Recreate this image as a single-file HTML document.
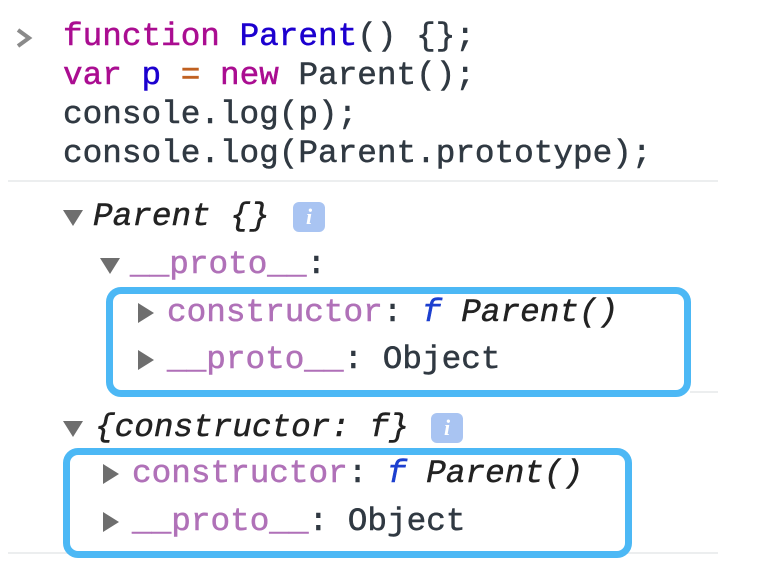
<!DOCTYPE html>
<html><head><meta charset="utf-8"><style>
html,body{margin:0;padding:0;background:#fff;width:778px;height:571px;overflow:hidden;position:relative}
.t{position:absolute;font-family:"Liberation Mono",monospace;font-size:32.7px;line-height:39px;white-space:pre;color:#303942;-webkit-text-stroke:0.5px currentColor}
.k{color:#aa0d91}.b{color:#1c00cf}.o{color:#c06020}.pp{color:#b071b8}.i{font-style:italic;color:#222}.f{font-style:italic;color:#1c3fcf}
.sep{position:absolute;height:2px;background:#eceeef}
.box{position:absolute;border:7px solid #4cb8f5;border-radius:15px;box-sizing:border-box}
.tri{position:absolute;width:0;height:0}
.dn{border-left:10px solid transparent;border-right:10px solid transparent;border-top:16px solid #6e6e6e}
.rt{border-top:10px solid transparent;border-bottom:10px solid transparent;border-left:16px solid #6e6e6e}
.info{position:absolute;width:32px;height:30px;border-radius:6px;background:#a9c4f2;color:#fff;font:italic bold 22px "Liberation Serif",serif;text-align:center;line-height:30px}
</style></head><body>
<svg style="position:absolute;left:14px;top:27px" width="20" height="22" viewBox="0 0 20 22"><path d="M4 3 L15 11 L4 19" fill="none" stroke="#8a8a8a" stroke-width="4"/></svg>
<div class="t" style="left:63px;top:17px"><span class="k">function</span> <span class="b">Parent</span>() {};
<span class="k">var</span> <span class="b">p</span> <span class="o">=</span> <span class="k">new</span> Parent();
console.log(p);
console.log(Parent.prototype);</div>
<div class="sep" style="left:8px;top:180px;width:710px"></div>

<div class="tri dn" style="left:63px;top:210px"></div>
<div class="t i" style="left:93px;top:197px">Parent {}</div>
<div class="info" style="left:293px;top:202px">i</div>

<div class="tri dn" style="left:100px;top:258px"></div>
<div class="t" style="left:130px;top:245px"><span class="pp">__proto__</span>:</div>

<div class="box" style="left:106px;top:287px;width:585px;height:110px"></div>
<div class="tri rt" style="left:138px;top:303px"></div>
<div class="t" style="left:167px;top:293px"><span class="pp">constructor</span>: <span class="f">f</span> <span class="i">Parent()</span></div>
<div class="tri rt" style="left:138px;top:350px"></div>
<div class="t" style="left:167px;top:340px"><span class="pp">__proto__</span>: Object</div>
<div class="sep" style="left:690px;top:391px;width:28px"></div>

<div class="tri dn" style="left:63px;top:421px"></div>
<div class="t i" style="left:95px;top:408px">{constructor: f}</div>
<div class="info" style="left:431px;top:413px">i</div>

<div class="sep" style="left:8px;top:552px;width:710px"></div>
<div class="box" style="left:63px;top:448px;width:569px;height:110px"></div>
<div class="tri rt" style="left:103px;top:464px"></div>
<div class="t" style="left:132px;top:454px"><span class="pp">constructor</span>: <span class="f">f</span> <span class="i">Parent()</span></div>
<div class="tri rt" style="left:103px;top:512px"></div>
<div class="t" style="left:132px;top:502px"><span class="pp">__proto__</span>: Object</div>
</body></html>
